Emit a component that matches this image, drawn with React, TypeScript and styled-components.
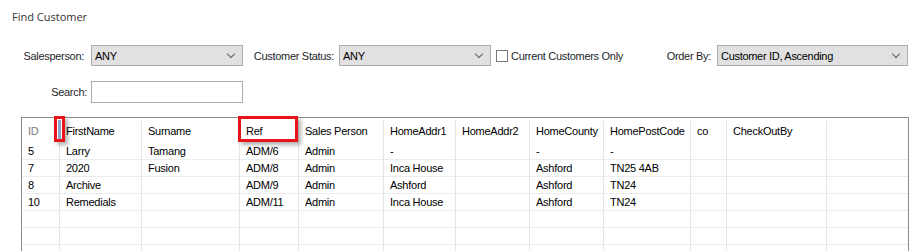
import React from 'react';
import styled, { createGlobalStyle } from 'styled-components';

const GlobalStyle = createGlobalStyle`
  html, body {
    margin: 0;
    padding: 0;
    background: #fff;
  }
  body {
    font-family: "Liberation Sans", Arial, sans-serif;
    overflow: hidden;
  }
`;

interface Row {
  id: string;
  first: string;
  surname: string;
  ref: string;
  sales: string;
  addr1: string;
  addr2: string;
  county: string;
  postcode: string;
  co: string;
  checkout: string;
}

const columns = [
  { title: 'ID', width: 38, key: 'id' },
  { title: 'FirstName', width: 82, key: 'first' },
  { title: 'Surname', width: 98, key: 'surname' },
  { title: 'Ref', width: 59, key: 'ref' },
  { title: 'Sales Person', width: 85, key: 'sales' },
  { title: 'HomeAddr1', width: 72, key: 'addr1' },
  { title: 'HomeAddr2', width: 74, key: 'addr2' },
  { title: 'HomeCounty', width: 74, key: 'county' },
  { title: 'HomePostCode', width: 87, key: 'postcode' },
  { title: 'co', width: 36, key: 'co' },
  { title: 'CheckOutBy', width: 100, key: 'checkout' },
] as const;

const rows: Row[] = [
  { id: '5', first: 'Larry', surname: 'Tamang', ref: 'ADM/6', sales: 'Admin', addr1: '-', addr2: '', county: '-', postcode: '-', co: '', checkout: '' },
  { id: '7', first: '2020', surname: 'Fusion', ref: 'ADM/8', sales: 'Admin', addr1: 'Inca House', addr2: '', county: 'Ashford', postcode: 'TN25 4AB', co: '', checkout: '' },
  { id: '8', first: 'Archive', surname: '', ref: 'ADM/9', sales: 'Admin', addr1: 'Ashford', addr2: '', county: 'Ashford', postcode: 'TN24', co: '', checkout: '' },
  { id: '10', first: 'Remedials', surname: '', ref: 'ADM/11', sales: 'Admin', addr1: 'Inca House', addr2: '', county: 'Ashford', postcode: 'TN24', co: '', checkout: '' },
];

const template = columns.map((c) => `${c.width}px`).join(' ') + ' 1fr';

export default function App() {
  return (
    <Page>
      <GlobalStyle />
      <Title>Find Customer</Title>

      <FilterRow>
        <Label $w={84}>Salesperson:</Label>
        <Select $w={152} $ml={7}>
          <span>ANY</span>
          <Chevron />
        </Select>
        <Label $w={91}>Customer Status:</Label>
        <Select $w={152} $ml={5}>
          <span>ANY</span>
          <Chevron />
        </Select>
        <Check>
          <Box />
          Current Customers Only
        </Check>
        <OrderBy>
          <Label $w={60}>Order By:</Label>
          <Select $w={191} $ml={6}>
            <span>Customer ID, Ascending</span>
            <Chevron />
          </Select>
        </OrderBy>
      </FilterRow>

      <SearchRow>
        <Label $w={87}>Search:</Label>
        <SearchInput />
      </SearchRow>

      <GridWrap>
        <Grid>
          <HeaderRow>
            {columns.map((c) => (
              <HeadCell key={c.key} $muted={c.key === 'id'}>
                {c.title}
              </HeadCell>
            ))}
            <HeadCell $last />
          </HeaderRow>
          {rows.map((r) => (
            <BodyRow key={r.id}>
              {columns.map((c) => (
                <Cell key={c.key}>{r[c.key]}</Cell>
              ))}
              <Cell $last />
            </BodyRow>
          ))}
          {[0, 1, 2].map((i) => (
            <BodyRow key={'e' + i}>
              {columns.map((c) => (
                <Cell key={c.key} />
              ))}
              <Cell $last />
            </BodyRow>
          ))}
        </Grid>

        {/* annotation boxes drawn over the header */}
        <Marker style={{ left: 33, width: 11 }}>
          <Splitter />
        </Marker>
        <Marker style={{ left: 217, width: 60 }} />
      </GridWrap>
    </Page>
  );
}

const Page = styled.div`
  width: 923px;
  height: 251px;
  overflow: hidden;
  color: #000;
`;

const Title = styled.div`
  padding: 9px 0 0 12px;
  height: 16px;
  line-height: 16px;
  font-family: "Open Sans", "Liberation Sans", sans-serif;
  font-size: 11px;
  color: #333;
`;

const FilterRow = styled.div`
  display: flex;
  align-items: center;
  margin-top: 20px;
  height: 21px;
  padding-right: 15px;
  font-size: 11px;
  letter-spacing: -0.3px;
  color: #1e1e2a;
`;

const SearchRow = styled.div`
  display: flex;
  align-items: center;
  margin-top: 15px;
  height: 22px;
  font-size: 11px;
  letter-spacing: -0.3px;
  color: #1e1e2a;
`;

const Label = styled.div<{ $w: number }>`
  width: ${(p) => p.$w}px;
  flex: none;
  text-align: right;
  white-space: nowrap;
`;

const Select = styled.div<{ $w: number; $ml: number }>`
  box-sizing: border-box;
  width: ${(p) => p.$w}px;
  height: 21px;
  margin-left: ${(p) => p.$ml}px;
  flex: none;
  display: flex;
  align-items: center;
  justify-content: space-between;
  padding: 0 8px 0 3px;
  background: #e1e1e1;
  border: 1px solid #adadad;
  color: #000;
`;

const Chevron = styled.i`
  width: 5px;
  height: 5px;
  border-right: 1px solid #606060;
  border-bottom: 1px solid #606060;
  transform: translateY(-2px) rotate(45deg);
`;

const Check = styled.label`
  display: flex;
  align-items: center;
  gap: 3px;
  margin-left: 5px;
  white-space: nowrap;
`;

const Box = styled.span`
  box-sizing: border-box;
  width: 12px;
  height: 12px;
  border: 1px solid #777;
  background: #fff;
`;

const OrderBy = styled.div`
  display: flex;
  align-items: center;
  margin-left: auto;
`;

const SearchInput = styled.div`
  box-sizing: border-box;
  width: 152px;
  height: 22px;
  margin-left: 4px;
  border: 1px solid #abadb3;
  background: #fff;
`;

const GridWrap = styled.div`
  position: relative;
  margin: 14px 0 0 21px;
  width: 888px;
`;

const Grid = styled.div`
  box-sizing: border-box;
  width: 888px;
  border: 1px solid #8a8a8a;
  border-bottom: none;
  font-size: 11px;
  letter-spacing: -0.25px;
`;

const HeaderRow = styled.div`
  display: grid;
  grid-template-columns: ${template};
  height: 25px;
`;

const HeadCell = styled.div<{ $muted?: boolean; $last?: boolean }>`
  position: relative;
  padding: 0 0 0 6px;
  line-height: 26px;
  white-space: nowrap;
  overflow: hidden;
  color: ${(p) => (p.$muted ? '#7a7a7a' : '#000')};
  &::after {
    content: '';
    display: ${(p) => (p.$last ? 'none' : 'block')};
    position: absolute;
    right: 0;
    top: 3px;
    bottom: 0;
    width: 1px;
    background: #e6e6e6;
  }
`;

const BodyRow = styled.div`
  display: grid;
  grid-template-columns: ${template};
  height: 17px;
  box-sizing: border-box;
  border-bottom: 1px solid #ececec;
`;

const Cell = styled.div<{ $last?: boolean }>`
  box-sizing: border-box;
  padding-left: 6px;
  line-height: 16px;
  white-space: nowrap;
  overflow: hidden;
  border-right: ${(p) => (p.$last ? 'none' : '1px solid #e6e6e6')};
`;

const Marker = styled.div`
  position: absolute;
  top: -1px;
  height: 26px;
  box-sizing: border-box;
  border: 3px solid #e8131b;
  box-shadow: 3px 3px 4px rgba(0, 0, 0, 0.3);
  display: flex;
  justify-content: center;
`;

const Splitter = styled.div`
  width: 3px;
  margin-top: 1px;
  height: 19px;
  background: #8aa7c6;
`;
